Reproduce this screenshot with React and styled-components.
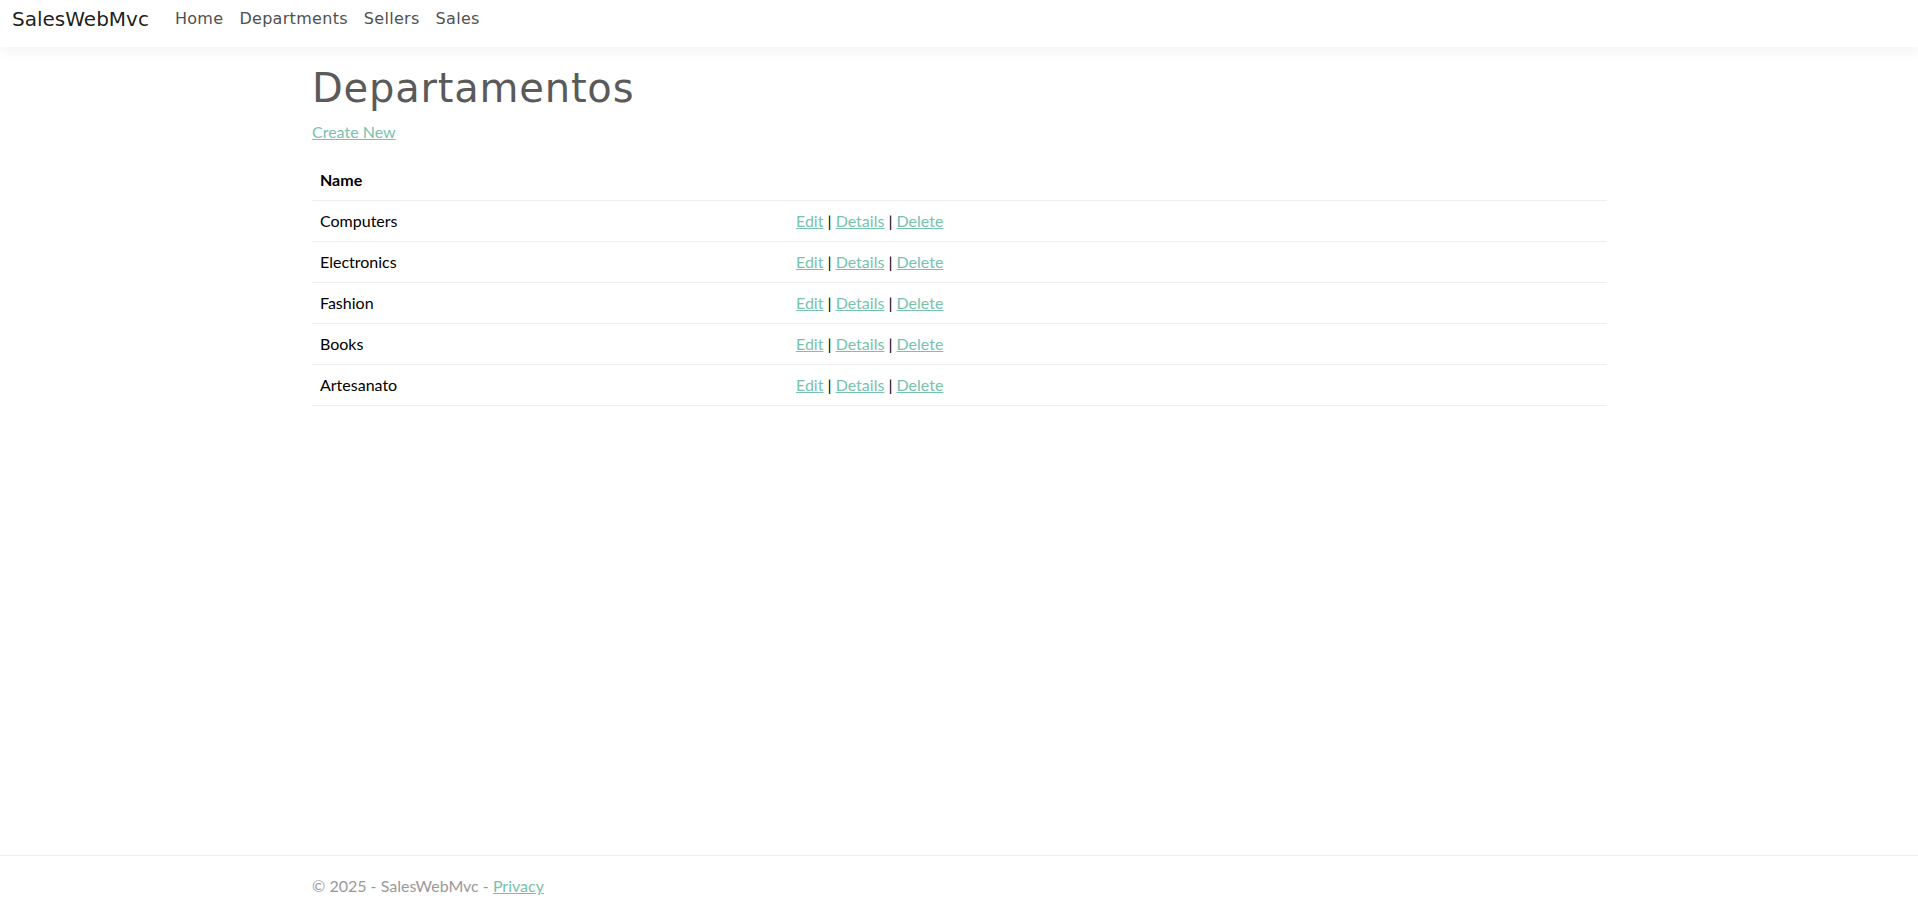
import styled, { createGlobalStyle } from "styled-components";

const GlobalStyle = createGlobalStyle`
    *, *::before, *::after {
        box-sizing: border-box;
    }
    body {
        margin: 0;
        background: #fff;
        font-family: Lato, "Liberation Sans", sans-serif;
        font-size: 16px;
        line-height: 1.5;
        color: #888;
    }
`;

const Page = styled.div`
    display: flex;
    flex-direction: column;
    min-height: 100vh;
`;

const Navbar = styled.header`
    display: flex;
    align-items: flex-start;
    height: 47px;
    padding: 4px 12px 0;
    background: #fff;
    box-shadow: 0 4px 12px rgba(0, 0, 0, 0.05);
    position: relative;
    z-index: 1;
`;

const Brand = styled.a`
    font-family: "DejaVu Sans", sans-serif;
    font-size: 20px;
    line-height: 30px;
    color: rgba(0, 0, 0, 0.9);
    text-decoration: none;
    margin-right: 18px;
`;

const NavList = styled.nav`
    display: flex;
    align-items: center;
    height: 30px;
`;

const NavLink = styled.a`
    font-family: "DejaVu Sans", sans-serif;
    font-size: 16px;
    line-height: 24px;
    letter-spacing: 0.3px;
    padding: 0 8px;
    color: #505050;
    text-decoration: none;
`;

const Main = styled.main`
    flex: 1;
    width: 100%;
    max-width: 1320px;
    margin: 0 auto;
    padding: 17px 12px 0 13px;
`;

const Title = styled.h1`
    font-family: "DejaVu Sans", sans-serif;
    font-weight: 400;
    font-size: 40px;
    line-height: 48px;
    letter-spacing: 0.8px;
    color: #5a5a5a;
    margin: 0 0 8px;
`;

const Link = styled.a`
    color: #78c2ad;
    text-decoration: underline;
`;

const Paragraph = styled.p`
    margin: 0 0 16px;
`;

const Table = styled.table`
    width: 100%;
    border-collapse: collapse;
    color: #000;
`;

const Th = styled.th`
    text-align: left;
    font-weight: 700;
    padding: 8px;
    border-bottom: 1px solid #eee;
    width: ${props => props.$width || "auto"};
`;

const Td = styled.td`
    padding: 8px;
    border-bottom: 1px solid #eee;
`;

const Footer = styled.footer`
    border-top: 1px solid #eee;
    padding: 6px 0 1px;
    line-height: 48px;
    color: #999;
`;

const FooterInner = styled.div`
    max-width: 1320px;
    margin: 0 auto;
    padding: 0 12px 0 13px;
`;

const departments = ["Computers", "Electronics", "Fashion", "Books", "Artesanato"];

export default function App() {
    return (
        <Page>
            <GlobalStyle />
            <Navbar>
                <Brand href="#">SalesWebMvc</Brand>
                <NavList>
                    <NavLink href="#">Home</NavLink>
                    <NavLink href="#">Departments</NavLink>
                    <NavLink href="#">Sellers</NavLink>
                    <NavLink href="#">Sales</NavLink>
                </NavList>
            </Navbar>
            <Main>
                <Title>Departamentos</Title>
                <Paragraph>
                    <Link href="#">Create New</Link>
                </Paragraph>
                <Table>
                    <thead>
                        <tr>
                            <Th $width="476px">Name</Th>
                            <Th></Th>
                        </tr>
                    </thead>
                    <tbody>
                        {departments.map(name => (
                            <tr key={name}>
                                <Td>{name}</Td>
                                <Td>
                                    <Link href="#">Edit</Link> | <Link href="#">Details</Link> | <Link href="#">Delete</Link>
                                </Td>
                            </tr>
                        ))}
                    </tbody>
                </Table>
            </Main>
            <Footer>
                <FooterInner>
                    &copy; 2025 - SalesWebMvc - <Link href="#">Privacy</Link>
                </FooterInner>
            </Footer>
        </Page>
    );
}
